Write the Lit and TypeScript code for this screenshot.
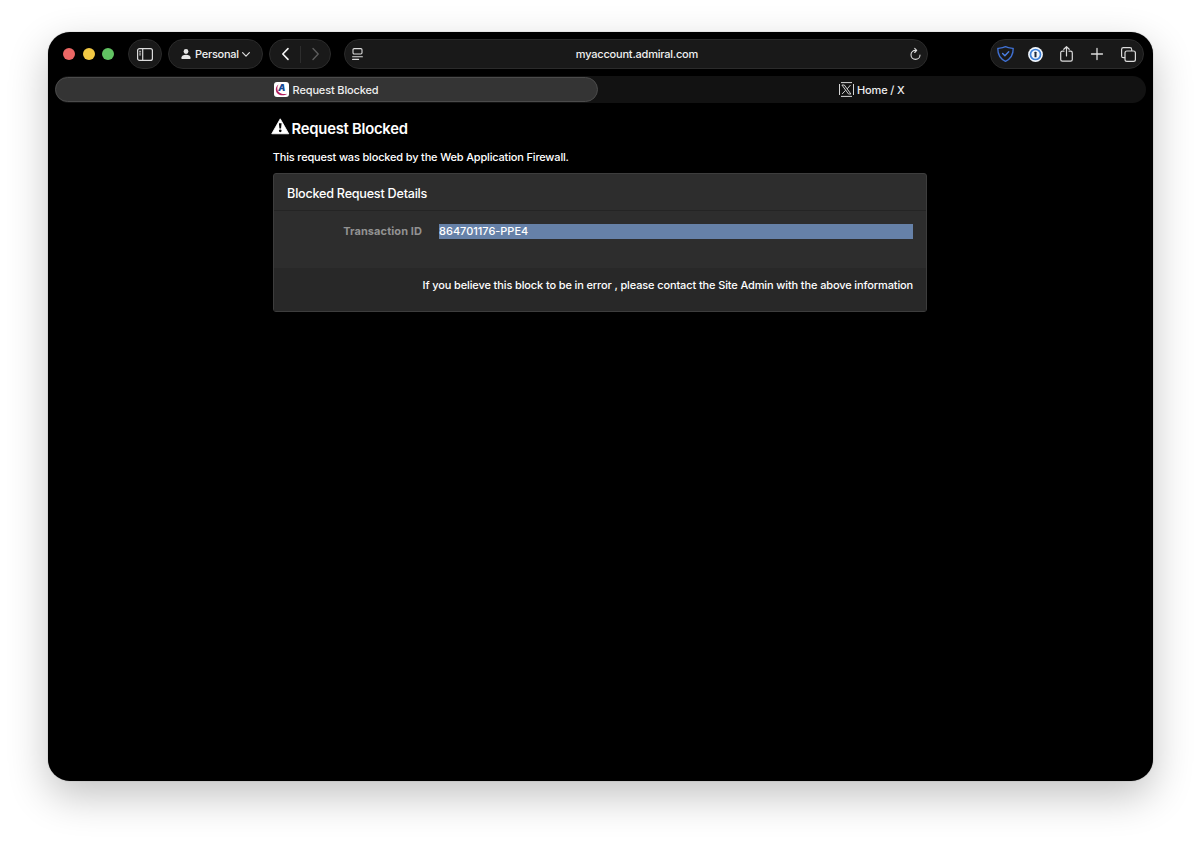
import { LitElement, html, css } from "lit";
import { customElement } from "lit/decorators.js";

@customElement("browser-toolbar")
class BrowserToolbar extends LitElement {
  static styles = css`
    :host { display: flex; height: 30.5px; margin: 6.6px 8.4px 0 15.6px; align-items: center; color: #f0f0f0; font-size: 11px; font-weight: 500; }
    svg { display: block; flex: none; overflow: visible; fill: none; stroke: #dcdcdc; stroke-width: 1.2; stroke-linecap: round; stroke-linejoin: round; }
    .lights { display: flex; gap: 7.4px; width: 64.4px; flex: none; }
    .light { width: 12px; height: 12px; border-radius: 50%; }
    .red { background: #ec6765; }
    .yellow { background: #f3c944; }
    .green { background: #61c362; }
    .pill { box-sizing: border-box; height: 30.5px; flex: none; display: flex; align-items: center; border: 1px solid #2b2b2b; border-radius: 16px; background: #191919; }
    .sidebar { width: 34.4px; justify-content: center; }
    .profile { width: 94.4px; margin-left: 6.3px; padding-left: 11.5px; }
    .profile-name { margin-left: 4.2px; width: 44.5px; letter-spacing: -.26px; white-space: nowrap; }
    .chevron { margin-left: 3px; }
    .nav { width: 62px; margin-left: 6.4px; padding: 0 11px 0 11.6px; justify-content: space-between; }
    .divider { width: 1px; height: 17px; background: #2d2d2d; margin-left: .4px; }
    .address { width: 583.5px; margin-left: 13.2px; padding: 0 6px 0 7px; justify-content: space-between; }
    .host { letter-spacing: -.21px; margin-left: 1px; }
    .tools { margin-left: auto; width: 154.6px; padding: 0 7px 0 6px; }
    .tool { display: flex; justify-content: center; }
    .t1 { width: 17px; }
    .t2 { width: 15px; margin-left: 14px; }
    .t3 { width: 13px; margin-left: 17px; }
    .t4 { width: 12px; margin-left: 18.5px; }
    .t5 { width: 15px; margin-left: 17.5px; }
    .solid { fill: #e6e6e6; stroke: none; }
    .dim { stroke: #5c5c5c; }
  `;
  render() {
    return html`
      <div class="lights"><i class="light red"></i><i class="light yellow"></i><i class="light green"></i></div>
      <div class="pill sidebar">
        <svg width="16" height="13" viewBox="0 0 16 13"><rect x=".6" y=".6" width="14.8" height="11.8" rx="2"/><path d="M5.7 .8v11.4"/><path d="M2.5 3.3h1.2M2.5 5.1h1.2M2.5 6.9h1.2" stroke-width=".9"/></svg>
      </div>
      <div class="pill profile">
        <svg class="solid" width="10" height="10" viewBox="0 0 10 10"><circle cx="5" cy="2.5" r="2.4"/><path d="M.3 9.1C.3 7 2.4 5.8 5 5.8S9.7 7 9.7 9.1c0 .6-.3.9-.9.9H1.2c-.6 0-.9-.3-.9-.9z"/></svg>
        <span class="profile-name">Personal</span>
        <svg class="chevron" width="8" height="5" viewBox="0 0 8 5"><path d="M.6.7 4 4.2 7.4.7"/></svg>
      </div>
      <div class="pill nav">
        <svg width="7" height="12" viewBox="0 0 7 12"><path d="M6 .6.8 6 6 11.4" stroke-width="1.6" stroke="#f4f4f4"/></svg>
        <i class="divider"></i>
        <svg width="7" height="12" viewBox="0 0 7 12"><path class="dim" d="M1 .6 6.2 6 1 11.4" stroke-width="1.4"/></svg>
      </div>
      <div class="pill address">
        <svg width="11" height="12" viewBox="0 0 11 12"><rect x="1" y=".6" width="9" height="5.4" rx="1.2" stroke-width="1.1"/><path d="M.6 8.7h9.8M.6 11.4h6" stroke-width="1.1"/></svg>
        <span class="host">myaccount.admiral.com</span>
        <svg width="11" height="12" viewBox="0 0 11 12"><path d="M5.5 2.4a4.5 4.5 0 1 0 4.5 4.6" stroke-width="1.1"/><path d="M4.7.4 6.7 2.4 4.7 4.5" stroke-width="1.1"/></svg>
      </div>
      <div class="pill tools">
        <span class="tool t1"><svg width="17" height="16" viewBox="0 0 17 16"><path stroke="#3f6fd0" stroke-width="1.4" d="M8.5.7C6 2 3.4 2.2.8 2.5.7 8 3.1 12.7 8.5 15.3c5.4-2.6 7.8-7.3 7.7-12.8C13.6 2.2 11 2 8.5.7z"/><path stroke="#4a7fe6" stroke-width="1.4" d="m5.6 7.4 2.3 2.3 3.8-3.9"/></svg></span>
        <span class="tool t2"><svg width="15" height="15" viewBox="0 0 15 15"><circle cx="7.5" cy="7.5" r="7.4" fill="#f2f7fd" stroke="none"/><circle cx="7.5" cy="7.5" r="5" fill="#f2f7fd" stroke="#3d80d8" stroke-width="1.7"/><rect x="6.5" y="4.7" width="2" height="5.6" rx=".6" fill="#1d2a3c" stroke="none"/></svg></span>
        <span class="tool t3"><svg width="13" height="16" viewBox="0 0 13 16"><path d="M4 5.2H2.4C1.3 5.2.7 5.8.7 6.9v6.6c0 1.1.6 1.7 1.7 1.7h8.2c1.1 0 1.7-.6 1.7-1.7V6.9c0-1.1-.6-1.7-1.7-1.7H9M6.5 10V.9M3.8 3.3 6.5.7l2.7 2.6"/></svg></span>
        <span class="tool t4"><svg width="12" height="12" viewBox="0 0 12 12"><path d="M6 .5v11M.5 6h11" stroke-width="1.3"/></svg></span>
        <span class="tool t5"><svg width="15" height="15" viewBox="0 0 15 15"><path d="M3.7 10.7H2.4C1.3 10.7.6 10 .6 8.9V2.4C.6 1.3 1.3.6 2.4.6h6.5c1.1 0 1.8.7 1.8 1.8v1.1"/><rect x="4" y="4" width="10.4" height="10.4" rx="1.9"/></svg></span>
      </div>
    `;
  }
}

@customElement("tab-strip")
class TabStrip extends LitElement {
  static styles = css`
    :host { display: flex; box-sizing: border-box; height: 26.8px; margin: 6.8px 7px 0 7px; padding: 1.3px 0 1.3px .4px; border-radius: 14px; background: #121212; color: #eee; font-size: 11px; font-weight: 500; letter-spacing: -.15px; }
    .tab { box-sizing: border-box; display: flex; flex: 1; align-items: center; justify-content: center; gap: 3.5px; border: 1px solid transparent; border-radius: 13px; white-space: nowrap; }
    .active { flex: 0 0 542.6px; background: #343434; border-color: #4b4b4b; }
    svg { display: block; flex: none; }
    .letter { font: italic 900 9px Inter, sans-serif; fill: #174a94; }
  `;
  render() {
    return html`
      <div class="tab active">
        <svg width="15" height="15" viewBox="0 0 15 15"><rect width="15" height="15" rx="3" fill="#fff"/><path d="M4.6 2.4C1.6 4.200 1 8.200 3 10.900c2.300 2.900 6.800 3.300 10.400.8-3.400.7-7 .2-9-2C2.900 7.700 2.900 4.600 4.600 2.400z" fill="#b5215f"/><text class="letter" x="4.300" y="9.300">A</text></svg>
        <span>Request Blocked</span>
      </div>
      <div class="tab">
        <svg width="15" height="15" viewBox="0 0 15 15" fill="none" stroke="#d5d5d5"><path d="M.5 2v11M14.5 2v11M2 .6h11M2 14.4h11" stroke-width="1"/><path d="M2.9 3h2.400l6.600 9H9.500zM11.500 3 8.200 6.900M6.600 8.300 3.100 12" stroke-width=".95"/></svg>
        <span>Home / X</span>
      </div>
    `;
  }
}

@customElement("app-root")
class AppRoot extends LitElement {
  static styles = css`
    :host { display: block; box-sizing: border-box; height: 844px; padding: 32.3px 0 0 47.6px; overflow: hidden; background: #fff; font-family: Inter, "Liberation Sans", sans-serif; }
    .window { box-sizing: border-box; width: 1105px; height: 748.9px; border-radius: 22px; background: #000; overflow: hidden; box-shadow: 0 0 1px rgba(0,0,0,.5), 0 15px 40px rgba(0,0,0,.24); display: flex; flex-direction: column; }
    .page { width: 654px; margin: 15px auto 0; color: #fff; font-size: 11px; font-weight: 500; white-space: nowrap; }
    .title { display: flex; align-items: center; gap: 2px; margin: 0 0 0 -2px; height: 20px; font-size: 14.8px; font-weight: 600; line-height: 22px; letter-spacing: -.24px; }
    .title svg { display: block; margin-top: -2.6px; }
    .title span { padding-top: 1.4px; }
    .intro { margin: 11px 0 0 -.4px; line-height: 16px; letter-spacing: -.17px; }
    .panel { box-sizing: border-box; margin-top: 8.4px; height: 138.6px; border: 1px solid #3d3d3d; border-radius: 3px; background: #2d2d2d; display: flex; flex-direction: column; }
    .panel-head { box-sizing: border-box; height: 37px; flex: none; padding: 0 13px; border-bottom: 1px solid #242424; font-size: 12.6px; line-height: 39px; letter-spacing: -.23px; }
    .details { flex: 1; display: flex; padding: 13px 13px 0; gap: 17px; line-height: 14.6px; }
    .label { width: 135px; text-align: right; color: #929292; font-weight: 700; letter-spacing: .1px; }
    .value { flex: 1; height: 14.6px; background: #6681a8; letter-spacing: -.03px; }
    .panel-foot { height: 43px; flex: none; padding-right: 13px; background: #282828; line-height: 35.6px; text-align: right; letter-spacing: -.125px; }
  `;
  render() {
    return html`
      <div class="window">
        <browser-toolbar></browser-toolbar>
        <tab-strip></tab-strip>
        <main class="page">
          <div class="title">
            <svg width="18.5" height="16.4" viewBox="0 0 18 16"><path d="M9 .8 17.3 15.4H.7z" fill="#fff" stroke="#fff" stroke-width=".8" stroke-linejoin="round"/><path d="M7.7 5.200h2.600l-.5 5H8.200z" fill="#000"/><circle cx="9" cy="12.5" r="1.3" fill="#000"/></svg>
            <span>Request Blocked</span>
          </div>
          <p class="intro">This request was blocked by the Web Application Firewall.</p>
          <section class="panel">
            <div class="panel-head">Blocked Request Details</div>
            <div class="details"><span class="label">Transaction ID</span><span class="value">864701176-PPE4</span></div>
            <div class="panel-foot">If you believe this block to be in error , please contact the Site Admin with the above information</div>
          </section>
        </main>
      </div>
    `;
  }
}
